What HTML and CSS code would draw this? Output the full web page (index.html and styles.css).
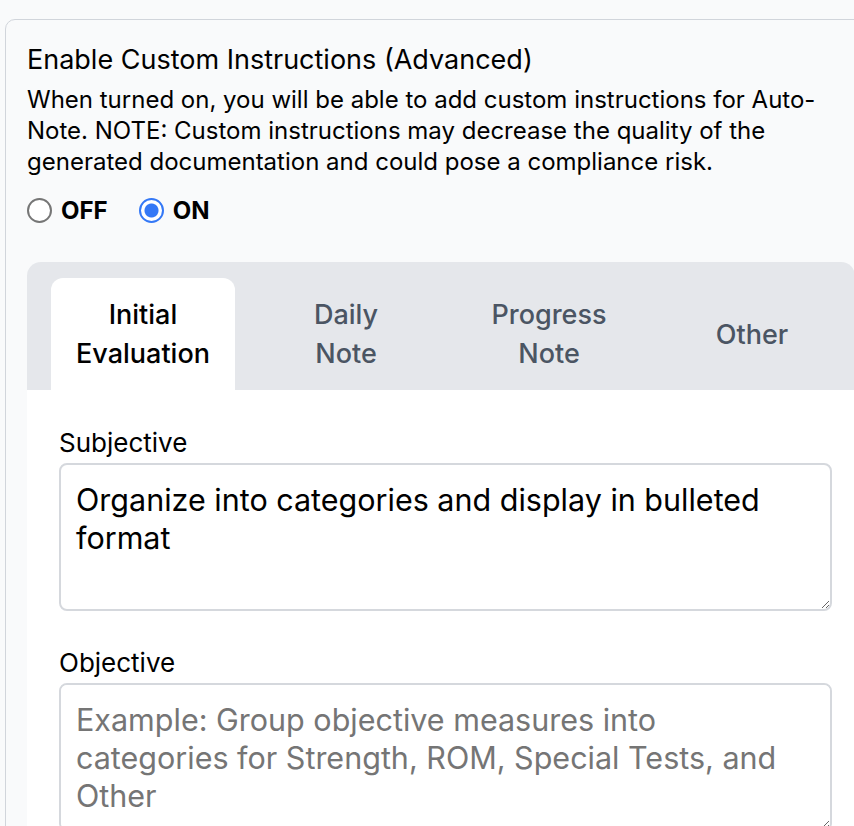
FILE: index.html
```html
<!DOCTYPE html>
<html lang="en">
<head>
<meta charset="utf-8">
<title>Custom Instructions</title>
<link rel="stylesheet" href="styles.css">
</head>
<body>
<div class="card">
  <h2 class="title">Enable Custom Instructions (Advanced)</h2>
  <p class="desc">When turned on, you will be able to add custom instructions for Auto-Note. NOTE: Custom instructions may decrease the quality of the generated documentation and could pose a compliance risk.</p>
  <div class="radios">
    <label class="radio"><input type="radio" name="ci" value="off"><span>OFF</span></label>
    <label class="radio"><input type="radio" name="ci" value="on" checked><span>ON</span></label>
  </div>
  <div class="tabs-wrap">
    <div class="tabs">
      <div class="tab active">Initial<br>Evaluation</div>
      <div class="tab">Daily<br>Note</div>
      <div class="tab">Progress<br>Note</div>
      <div class="tab">Other</div>
    </div>
    <div class="panel">
      <div class="field">
        <label class="field-label">Subjective</label>
        <textarea class="input">Organize into categories and display in bulleted format</textarea>
      </div>
      <div class="field">
        <label class="field-label">Objective</label>
        <textarea class="input" placeholder="Example: Group objective measures into categories for Strength, ROM, Special Tests, and Other"></textarea>
      </div>
    </div>
  </div>
</div>
</body>
</html>
```

FILE: styles.css
```css
html, body {
  margin: 0;
  padding: 0;
  background: #f9fafb;
  overflow: hidden;
  height: 826px;
}
body {
  font-family: Inter, "Liberation Sans", sans-serif;
  color: #000;
}
.card {
  margin: 19px 0 0 5px;
  width: 900px;
  box-sizing: border-box;
  border: 1px solid #d1d5db;
  border-radius: 10px;
  background: #f9fafb;
  padding: 24px 0 0 21px;
  height: 900px;
}
.title {
  margin: 0 0 8px;
  font-size: 27px;
  font-weight: 400;
  line-height: 32px;
}
.desc {
  margin: 0;
  width: 800px;
  font-size: 24px;
  line-height: 31px;
}
.radios {
  display: flex;
  align-items: center;
  gap: 31px;
  margin-top: 20px;
  height: 26px;
}
.radio {
  display: flex;
  align-items: center;
  gap: 9px;
  font-size: 24px;
  font-weight: 700;
}
.radio input {
  appearance: none;
  -webkit-appearance: none;
  margin: 0;
  width: 25px;
  height: 25px;
  border-radius: 50%;
  border: 2px solid #767676;
  background: #fff;
  box-sizing: border-box;
}
.radio input:checked {
  border: 2px solid #3478f6;
  background: radial-gradient(circle, #3478f6 0 6.5px, #fff 7.5px);
}
.tabs-wrap {
  margin-top: 39px;
  width: 828px;
}
.tabs {
  display: grid;
  grid-template-columns: repeat(4, 184px);
  column-gap: 19px;
  padding: 16px 0 0 24px;
  background: #e5e7eb;
  border-radius: 14px 14px 0 0;
}
.tab {
  height: 112px;
  display: flex;
  align-items: center;
  justify-content: center;
  text-align: center;
  font-size: 27px;
  font-weight: 500;
  line-height: 39px;
  color: #4b5563;
  border-radius: 12px 12px 0 0;
}
.tab.active {
  background: #fff;
  color: #000;
}
.panel {
  background: #fff;
  padding: 38px 23px 0 32px;
  height: 500px;
}
.field {
  display: flex;
  flex-direction: column;
  margin-bottom: 37px;
}
.field-label {
  font-size: 26px;
  line-height: 30px;
  margin-bottom: 5px;
}
.input {
  font-family: Inter, "Liberation Sans", sans-serif;
  font-size: 30.5px;
  line-height: 38px;
  color: #000;
  height: 148px;
  box-sizing: border-box;
  border: 2px solid #d5d8dd;
  border-radius: 8px;
  padding: 16px 30px 16px 15px;
  background: #fff;
  resize: vertical;
}
.input::placeholder {
  color: #757575;
}
```
